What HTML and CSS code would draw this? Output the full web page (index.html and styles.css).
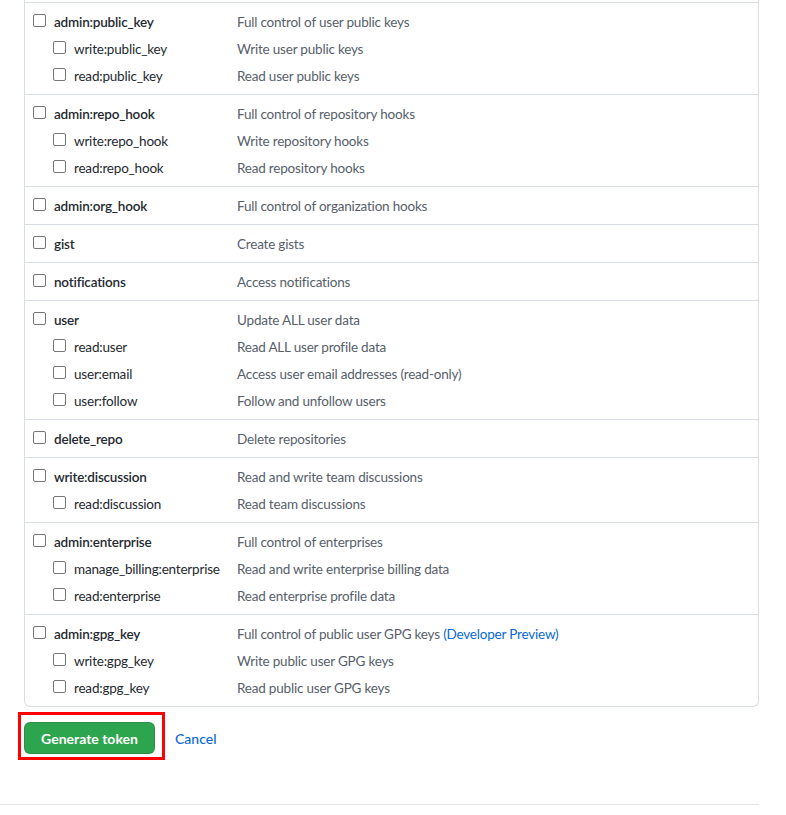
FILE: index.html
```html
<!DOCTYPE html>
<html>
<head>
<meta charset="utf-8">
<link rel="stylesheet" href="styles.css">
</head>
<body>
<div class="page">
  <div class="scopes">
    <div class="group">
      <label class="row parent"><span class="name"><input type="checkbox" class="cb"><span>admin:public_key</span></span><span class="desc">Full control of user public keys</span></label>
      <label class="row child"><span class="name"><input type="checkbox" class="cb"><span>write:public_key</span></span><span class="desc">Write user public keys</span></label>
      <label class="row child"><span class="name"><input type="checkbox" class="cb"><span>read:public_key</span></span><span class="desc">Read user public keys</span></label>
    </div>
    <div class="group">
      <label class="row parent"><span class="name"><input type="checkbox" class="cb"><span>admin:repo_hook</span></span><span class="desc">Full control of repository hooks</span></label>
      <label class="row child"><span class="name"><input type="checkbox" class="cb"><span>write:repo_hook</span></span><span class="desc">Write repository hooks</span></label>
      <label class="row child"><span class="name"><input type="checkbox" class="cb"><span>read:repo_hook</span></span><span class="desc">Read repository hooks</span></label>
    </div>
    <div class="group">
      <label class="row parent"><span class="name"><input type="checkbox" class="cb"><span>admin:org_hook</span></span><span class="desc">Full control of organization hooks</span></label>
    </div>
    <div class="group">
      <label class="row parent"><span class="name"><input type="checkbox" class="cb"><span>gist</span></span><span class="desc">Create gists</span></label>
    </div>
    <div class="group">
      <label class="row parent"><span class="name"><input type="checkbox" class="cb"><span>notifications</span></span><span class="desc">Access notifications</span></label>
    </div>
    <div class="group">
      <label class="row parent"><span class="name"><input type="checkbox" class="cb"><span>user</span></span><span class="desc">Update ALL user data</span></label>
      <label class="row child"><span class="name"><input type="checkbox" class="cb"><span>read:user</span></span><span class="desc">Read ALL user profile data</span></label>
      <label class="row child"><span class="name"><input type="checkbox" class="cb"><span>user:email</span></span><span class="desc">Access user email addresses (read-only)</span></label>
      <label class="row child"><span class="name"><input type="checkbox" class="cb"><span>user:follow</span></span><span class="desc">Follow and unfollow users</span></label>
    </div>
    <div class="group">
      <label class="row parent"><span class="name"><input type="checkbox" class="cb"><span>delete_repo</span></span><span class="desc">Delete repositories</span></label>
    </div>
    <div class="group">
      <label class="row parent"><span class="name"><input type="checkbox" class="cb"><span>write:discussion</span></span><span class="desc">Read and write team discussions</span></label>
      <label class="row child"><span class="name"><input type="checkbox" class="cb"><span>read:discussion</span></span><span class="desc">Read team discussions</span></label>
    </div>
    <div class="group">
      <label class="row parent"><span class="name"><input type="checkbox" class="cb"><span>admin:enterprise</span></span><span class="desc">Full control of enterprises</span></label>
      <label class="row child"><span class="name"><input type="checkbox" class="cb"><span>manage_billing:enterprise</span></span><span class="desc">Read and write enterprise billing data</span></label>
      <label class="row child"><span class="name"><input type="checkbox" class="cb"><span>read:enterprise</span></span><span class="desc">Read enterprise profile data</span></label>
    </div>
    <div class="group">
      <label class="row parent"><span class="name"><input type="checkbox" class="cb"><span>admin:gpg_key</span></span><span class="desc">Full control of public user GPG keys <a class="link" href="#">(Developer Preview)</a></span></label>
      <label class="row child"><span class="name"><input type="checkbox" class="cb"><span>write:gpg_key</span></span><span class="desc">Write public user GPG keys</span></label>
      <label class="row child"><span class="name"><input type="checkbox" class="cb"><span>read:gpg_key</span></span><span class="desc">Read public user GPG keys</span></label>
    </div>
  </div>
  <div class="actions">
    <span class="btn-wrap"><button class="btn" type="button">Generate token</button></span>
    <a class="cancel" href="#">Cancel</a>
  </div>
</div>
<div class="footer"></div>
</body>
</html>
```
FILE: styles.css
```css
html, body {
  margin: 0;
  padding: 0;
  background: #ffffff;
}
body {
  font-family: Lato, "Liberation Sans", sans-serif;
  font-size: 14px;
  color: #24292f;
}
.page {
  padding-left: 24px;
  width: 735px;
}
.scopes {
  border: 1px solid #d8dee4;
  border-top: none;
  border-radius: 0 0 6px 6px;
  padding-top: 2px;
  font-size: 13.5px;
  letter-spacing: -0.2px;
}
.group {
  border-top: 1px solid #d8dee4;
  padding: 5px 0;
}
.row {
  display: flex;
  align-items: center;
  height: 27px;
  padding-left: 8px;
}
.row.child {
  padding-left: 28px;
}
.name {
  display: flex;
  align-items: center;
  gap: 8px;
  font-weight: 600;
}
.row.parent .name { width: 204px; }
.row.child .name { width: 184px; font-weight: 400; }
.cb {
  appearance: none;
  -webkit-appearance: none;
  width: 13px;
  height: 13px;
  margin: 0;
  border: 1px solid #767676;
  border-radius: 2px;
  background: #fff;
  flex: none;
  position: relative;
  top: -1px;
}
.desc {
  color: #57606a;
}
.link {
  color: #0969da;
  text-decoration: none;
}
.actions {
  display: flex;
  align-items: center;
  gap: 20px;
  margin-top: 15px;
  height: 32px;
}
.btn-wrap {
  position: relative;
  display: inline-flex;
}
.btn-wrap::after {
  content: "";
  position: absolute;
  left: -6px;
  right: -10px;
  top: -10px;
  bottom: -6px;
  border: 3px solid #ff0000;
  pointer-events: none;
}
.btn {
  width: 131px;
  height: 32px;
  background: #2da44e;
  color: #ffffff;
  border: 1px solid rgba(27,31,36,0.15);
  border-radius: 6px;
  font-family: inherit;
  font-size: 14px;
  font-weight: 700;
  padding: 0;
}
.cancel {
  color: #0969da;
  text-decoration: none;
  font-weight: 500;
}
.footer {
  margin-top: 50px;
  width: 759px;
  border-top: 1px solid #e1e4e8;
}
```
